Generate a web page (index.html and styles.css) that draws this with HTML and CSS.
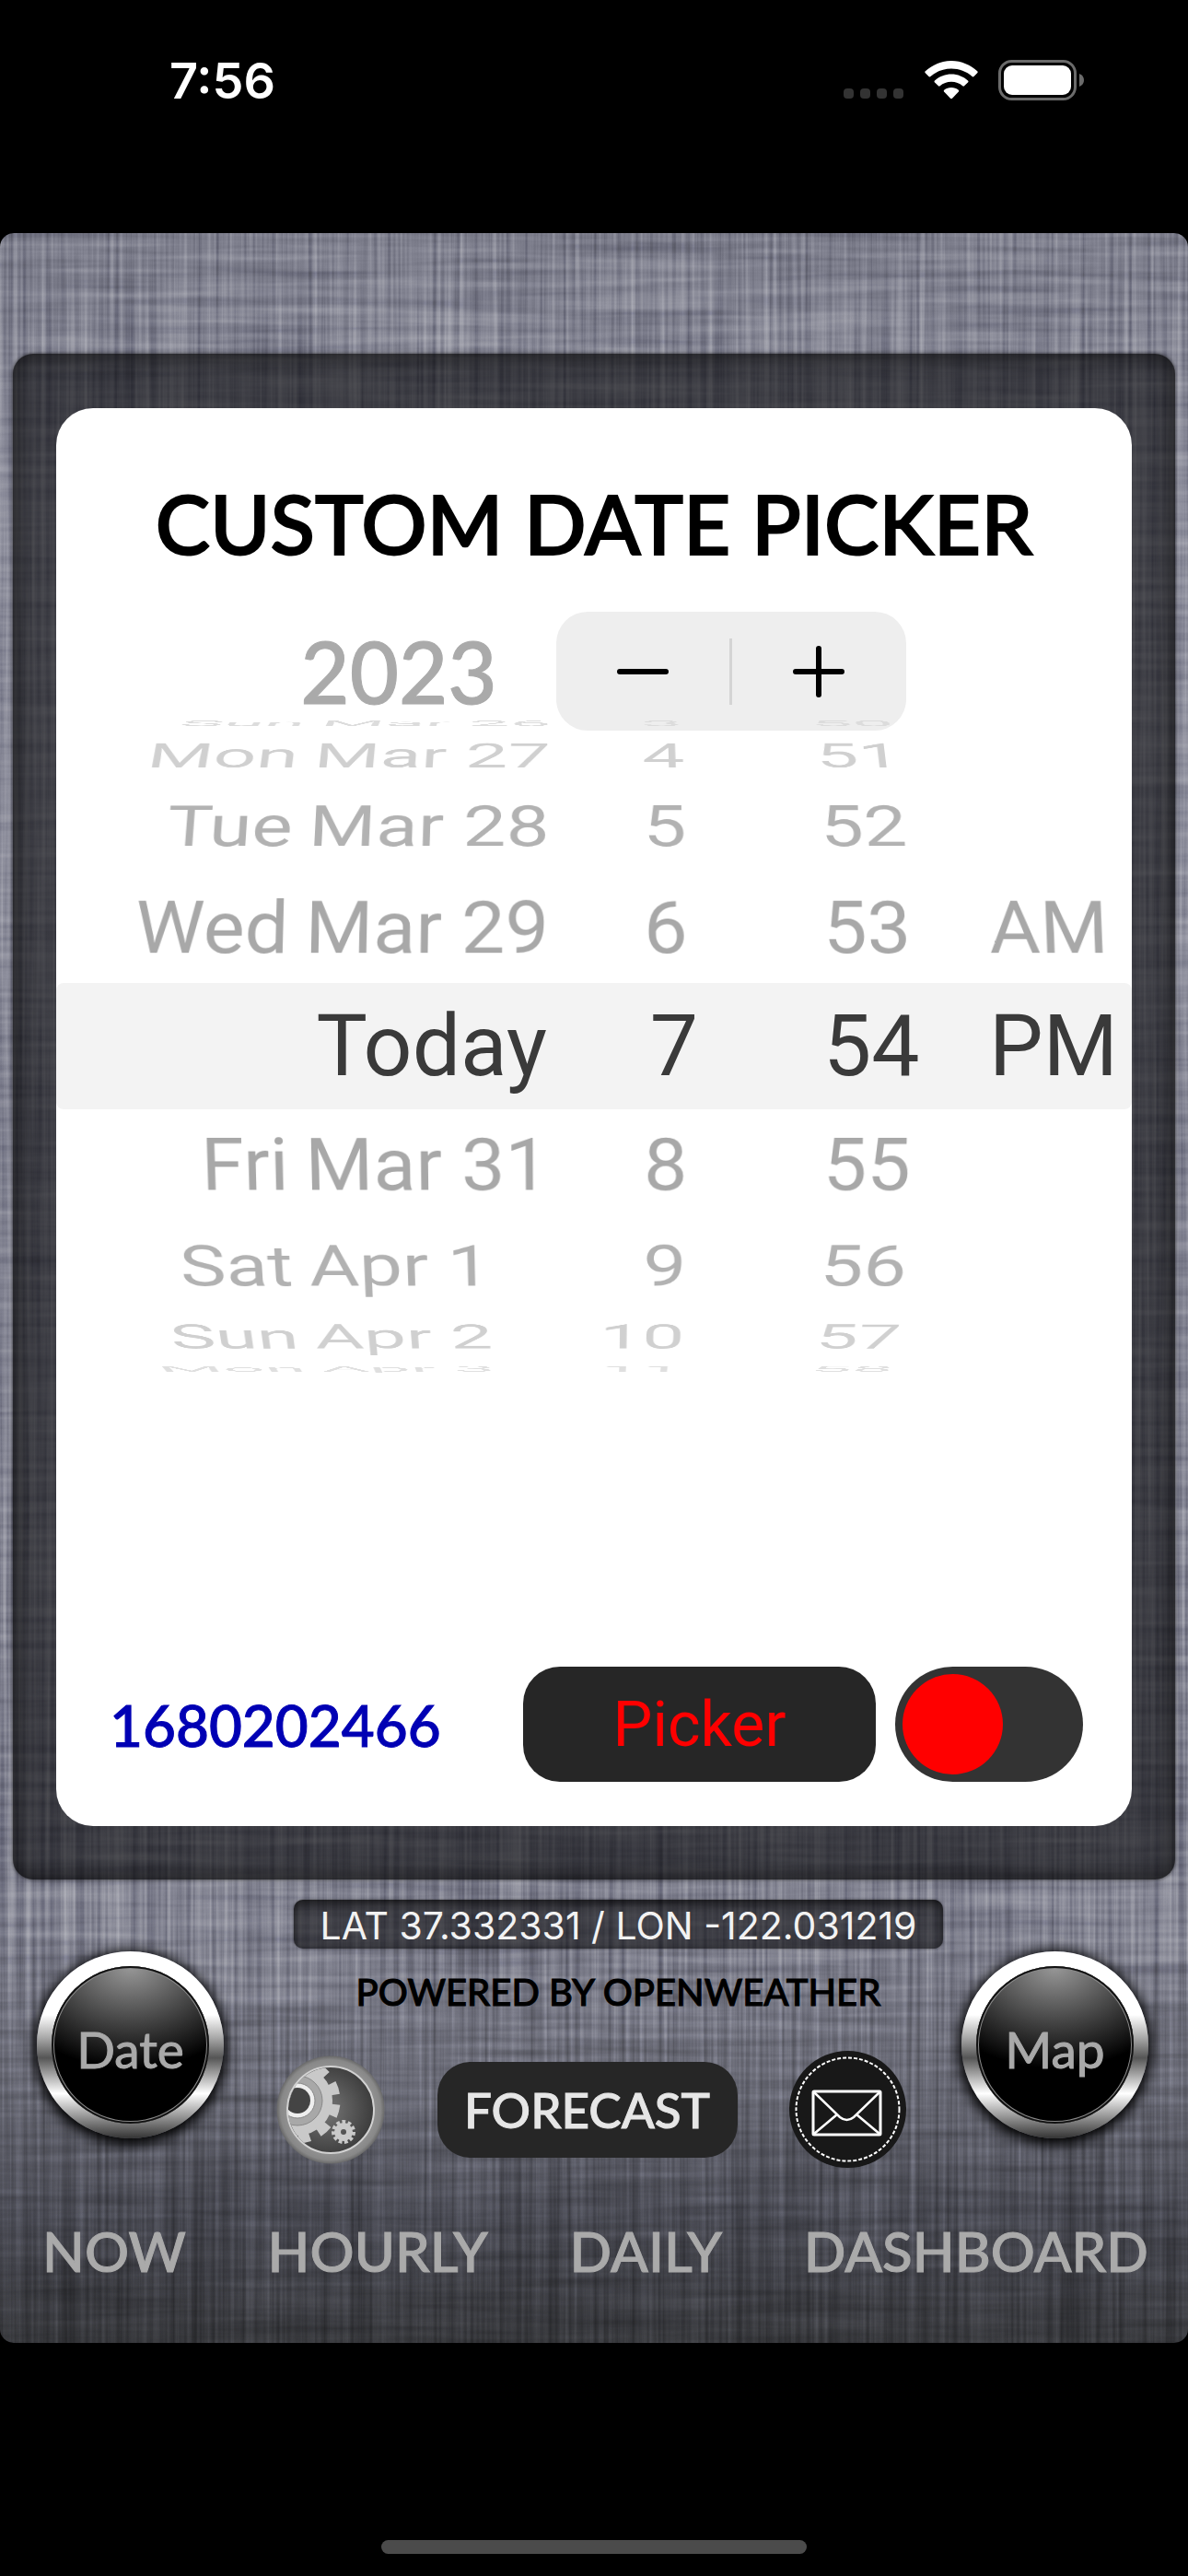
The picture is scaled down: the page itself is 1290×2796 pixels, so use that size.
FILE: index.html
```html
<!DOCTYPE html>
<html lang="en">
<head>
<meta charset="utf-8">
<meta name="viewport" content="width=device-width, initial-scale=1">
<title>Custom Date Picker</title>
<link rel="stylesheet" href="styles.css">
</head>
<body>
<header class="status">
  <time class="clock">7:56</time>
  <div class="status-icons">
    <svg width="66" height="44" viewBox="0 0 66 44" fill="#333"><rect y="31" width="11" height="11" rx="4"/><rect x="18" y="31" width="11" height="11" rx="4"/><rect x="36" y="31" width="11" height="11" rx="4"/><rect x="54" y="31" width="11" height="11" rx="4"/></svg>
    <svg width="58" height="44" viewBox="0 0 58 44" fill="#fff"><path d="M29 1C40 1 50 5.500 57.500 12.500Q58 13.500 57.200 14.300L53.500 18Q52.500 18.800 51.600 18C45.500 12.500 37.500 9.500 29 9.500S12.500 12.500 6.400 18Q5.500 18.800 4.500 18L.8 14.300Q0 13.500.5 12.500C8 5.500 18 1 29 1Z"/><path d="M29 15.500C36 15.500 42.300 18.200 47 22.500Q48 23.500 47 24.400L43 28.300Q42.200 29 41.300 28.300C38 25.500 33.700 23.800 29 23.800S20 25.500 16.700 28.300Q15.800 29 15 28.300L11 24.400Q10 23.500 11 22.500C15.700 18.200 22 15.500 29 15.500Z"/><path d="M29 30C32 30 34.700 31 36.800 32.700Q37.800 33.600 36.900 34.600L30 41.700Q29 42.600 28 41.700L21.100 34.600Q20.200 33.600 21.200 32.700C23.300 31 26 30 29 30Z"/></svg>
    <svg width="93" height="44" viewBox="0 0 93 44"><rect x="1.500" y="1.500" width="82" height="41" rx="13" fill="none" stroke="#6b6b6b" stroke-width="3"/><rect x="6" y="6" width="73" height="32" rx="9" fill="#fff"/><path d="M88 15Q93 17 93 22T88 29Z" fill="#6b6b6b"/></svg>
  </div>
</header>

<main class="app">
  <section class="bezel">
    <div class="card">
      <h1 class="title">CUSTOM DATE PICKER</h1>
      <div class="year-row">
        <output class="year">2023</output>
        <div class="stepper" role="group" aria-label="Year">
          <button class="step" aria-label="Previous year"><svg width="56" height="56" viewBox="0 0 56 56"><path d="M3 28H53" stroke="#000" stroke-width="6" stroke-linecap="round"/></svg></button>
          <button class="step" aria-label="Next year"><svg width="56" height="56" viewBox="0 0 56 56"><path d="M3 28H53M28 3V53" stroke="#000" stroke-width="6" stroke-linecap="round"/></svg></button>
        </div>
      </div>

      <div class="wheel" aria-label="Date and time">
        <div class="row up4"><span class="weekday">Sun</span><span>Mar 26</span><span class="hour">3</span><span class="minute">50</span></div>
        <div class="row up3"><span class="weekday">Mon</span><span>Mar 27</span><span class="hour">4</span><span class="minute">51</span></div>
        <div class="row up2"><span class="weekday">Tue</span><span>Mar 28</span><span class="hour">5</span><span class="minute">52</span></div>
        <div class="row up1"><span class="weekday">Wed</span><span>Mar 29</span><span class="hour">6</span><span class="minute">53</span><span>AM</span></div>
        <div class="row current"><span class="today">Today</span><span class="hour">7</span><span class="minute">54</span><span>PM</span></div>
        <div class="row down1"><span class="weekday">Fri</span><span>Mar 31</span><span class="hour">8</span><span class="minute">55</span></div>
        <div class="row down2"><span class="weekday">Sat</span><span>Apr 1</span><span class="hour">9</span><span class="minute">56</span></div>
        <div class="row down3"><span class="weekday">Sun</span><span>Apr 2</span><span class="hour">10</span><span class="minute">57</span></div>
        <div class="row down4"><span class="weekday">Mon</span><span>Apr 3</span><span class="hour">11</span><span class="minute">58</span></div>
      </div>

      <div class="card-foot">
        <output class="stamp">1680202466</output>
        <button class="picker-button">Picker</button>
        <input class="switch" type="checkbox" role="switch" aria-label="Use picker">
      </div>
    </div>
  </section>

  <section class="controls">
    <button class="metal">Date</button>
    <div class="center">
      <div class="place">
        <p class="coords">LAT 37.332331 / LON -122.031219</p>
        <p class="powered">POWERED BY OPENWEATHER</p>
      </div>
      <div class="actions">
        <button class="icon-button" aria-label="Settings">
          <svg width="118" height="118" viewBox="0 0 118 118">
            <defs>
              <radialGradient id="well" cx="45%" cy="50%" r="55%"><stop offset="0" stop-color="#777"/><stop offset="1" stop-color="#3c3c3c"/></radialGradient>
              <radialGradient id="rim"><stop offset=".8" stop-color="#929292"/><stop offset=".93" stop-color="#888"/><stop offset="1" stop-color="#686868"/></radialGradient>
              <clipPath id="port"><circle cx="59" cy="59" r="46"/></clipPath>
            </defs>
            <circle cx="59" cy="59" r="58.500" fill="url(#rim)"/>
            <circle cx="59" cy="59" r="47" fill="url(#well)" stroke="#d2d2d2" stroke-width="2"/>
            <g clip-path="url(#port)">
              <circle cx="23" cy="49" r="38" fill="#c9c9c9"/>
              <circle cx="23" cy="49" r="41" fill="none" stroke="#c9c9c9" stroke-width="11" pathLength="110" stroke-dasharray="5.500 4.500" transform="rotate(-27 23 49)"/>
              <circle cx="23" cy="49" r="27" fill="#a8a8a8" stroke="#888" stroke-width="1"/>
              <circle cx="23" cy="49" r="19" fill="#eee" stroke="#888" stroke-width="1"/>
              <circle cx="23" cy="49" r="14" fill="#444"/>
            </g>
            <circle cx="73" cy="83" r="6.500" fill="none" stroke="#c9c9c9" stroke-width="7"/>
            <circle cx="73" cy="83" r="11" fill="none" stroke="#c9c9c9" stroke-width="4" pathLength="110" stroke-dasharray="6 4"/>
          </svg>
        </button>
        <button class="forecast">FORECAST</button>
        <button class="icon-button" aria-label="Mail">
          <svg width="127" height="127" viewBox="0 0 127 127" fill="none" stroke="#fff">
            <circle cx="63.500" cy="63.500" r="63.500" fill="#181818" stroke="none"/>
            <circle cx="63.500" cy="63.500" r="56" stroke-width="2" stroke-dasharray="4 2"/>
            <rect x="26" y="44" width="73" height="47" rx="1" stroke-width="3"/>
            <path d="M27 45L55 72Q62.500 78 70 72L98 45M27 90L52 69M98 90L73 69" stroke-width="2.500"/>
          </svg>
        </button>
      </div>
    </div>
    <button class="metal">Map</button>
  </section>

  <nav class="tabs">
    <a href="#now">NOW</a>
    <a href="#hourly">HOURLY</a>
    <a href="#daily">DAILY</a>
    <a href="#dashboard">DASHBOARD</a>
  </nav>
</main>

<footer class="home"><div class="home-bar"></div></footer>
</body>
</html>
```
FILE: styles.css
```css
* {
  box-sizing: border-box;
}

body {
  margin: 0;
  min-height: 100vh;
  display: flex;
  flex-direction: column;
  background: #000;
  font-family: Futura, Lato, sans-serif;
}

h1, p {
  margin: 0;
}

button {
  margin: 0;
  padding: 0;
  border: 0;
  background: none;
  font: inherit;
  color: inherit;
}

svg {
  display: block;
}

/* Status bar */
.status {
  height: 253px;
  padding: 56px 113px 0 184px;
  display: flex;
  justify-content: space-between;
  align-items: flex-start;
}

.clock {
  font: 600 54px/64px Inter, sans-serif;
  color: #fff;
}

.status-icons {
  display: flex;
  gap: 22px;
  padding-top: 9px;
}

/* Woven metal body */
.app {
  flex: 1;
  display: flex;
  flex-direction: column;
  padding-top: 131px;
  border-radius: 15px;
  background-image:
    url("data:image/svg+xml,%3Csvg xmlns='http://www.w3.org/2000/svg' width='1290' height='2290'%3E%3Cfilter id='n' x='0' y='0' width='100%25' height='100%25' color-interpolation-filters='sRGB'%3E%3CfeTurbulence type='fractalNoise' baseFrequency='0.2 0.0025' numOctaves='3' seed='4'/%3E%3CfeColorMatrix values='.36 0 0 0 .32 .36 0 0 0 .32 .36 0 0 0 .32 0 0 0 0 1'/%3E%3C/filter%3E%3Crect width='1290' height='2290' filter='url(%23n)'/%3E%3C/svg%3E"),
    url("data:image/svg+xml,%3Csvg xmlns='http://www.w3.org/2000/svg' width='1290' height='2290'%3E%3Cfilter id='n' x='0' y='0' width='100%25' height='100%25' color-interpolation-filters='sRGB'%3E%3CfeTurbulence type='fractalNoise' baseFrequency='0.005 0.1' numOctaves='3' seed='9'/%3E%3CfeColorMatrix values='.22 0 0 0 .39 .22 0 0 0 .39 .22 0 0 0 .39 0 0 0 0 1'/%3E%3C/filter%3E%3Crect width='1290' height='2290' filter='url(%23n)'/%3E%3C/svg%3E"),
    linear-gradient(#7c7d8b 0%, #8d8e9c 12%, #858694 60%, #828391 80%, #63646f 89%, #484952 94%, #36373b 100%);
  background-size: 1290px 2290px, 1290px 2290px, auto;
  background-blend-mode: overlay, overlay, normal;
}

.bezel {
  flex: 1;
  display: flex;
  margin: 0 14px;
  padding: 59px 47px 58px;
  border-radius: 22px;
  background: rgba(8, 8, 10, 0.58);
  box-shadow: inset 0 0 26px rgba(0, 0, 0, 0.7), 0 0 4px rgba(0, 0, 0, 0.7);
}

.card {
  flex: 1;
  display: flex;
  flex-direction: column;
  padding: 69px 0 48px;
  border-radius: 40px;
  background: #fff;
}

.title {
  font-size: 89px;
  font-weight: 500;
  line-height: 112px;
  text-align: center;
  -webkit-text-stroke: 2px currentColor;
}

.year-row {
  margin-top: 40px;
  padding-left: 20px;
  display: flex;
  justify-content: center;
  align-items: center;
  gap: 64px;
}

.year {
  font-size: 92px;
  font-weight: 500;
  line-height: 112px;
  color: #aaa;
  -webkit-text-stroke: 1px currentColor;
}

.stepper {
  width: 380px;
  height: 129px;
  display: flex;
  align-items: center;
  border-radius: 34px;
  background: #eee;
}

.step {
  flex: 1;
  height: 72px;
  display: flex;
  justify-content: center;
  align-items: center;
}

.step + .step {
  border-left: 3px solid #d4d4d4;
}

/* Rows sit on a cylinder, 20 degrees apart */
.wheel {
  margin-top: 274px;
  display: grid;
  perspective: 5000px;
  font-family: Roboto, sans-serif;
}

.row {
  grid-area: 1 / 1;
  height: 137px;
  display: grid;
  grid-template-columns: 269fr 264fr 153fr 329fr 153fr;
  align-items: center;
  font-size: 85px;
  line-height: 100px;
  white-space: nowrap;
  color: #a8a8a8;
}

.row span {
  min-width: 0;
}

.weekday {
  padding-right: 18px;
  text-align: right;
}

.hour {
  text-align: right;
}

.minute {
  padding-left: 148px;
}

.current {
  grid-template-columns: 533fr 164fr 316fr 155fr;
  border-radius: 8px;
  background: #f3f3f3;
  font-size: 93px;
  color: #3a3a3a;
}

.current .minute {
  padding-left: 136px;
}

.today {
  text-align: right;
}

.up1 { transform: translateZ(-378px) rotateX(20deg) translateZ(378px); }
.up2 { transform: translateZ(-378px) rotateX(40deg) translateZ(378px); color: #b2b2b2; }
.up3 { transform: translateZ(-378px) rotateX(60deg) translateZ(378px); color: #d0d0d0; }
.up4 { transform: translateZ(-378px) rotateX(80deg) translateZ(378px); color: #dcdcdc; }
.down1 { transform: translateZ(-378px) rotateX(-20deg) translateZ(378px); }
.down2 { transform: translateZ(-378px) rotateX(-40deg) translateZ(378px); color: #b2b2b2; }
.down3 { transform: translateZ(-378px) rotateX(-60deg) translateZ(378px); color: #d0d0d0; }
.down4 { transform: translateZ(-378px) rotateX(-80deg) translateZ(378px); color: #dfdfdf; }

.card-foot {
  margin-top: auto;
  padding: 0 53px 0 58px;
  display: flex;
  align-items: center;
}

.stamp {
  flex: 1;
  font-size: 62px;
  font-weight: 500;
  color: #0000b4;
  -webkit-text-stroke: 1px currentColor;
}

.picker-button {
  width: 383px;
  height: 125px;
  margin-right: 21px;
  border-radius: 40px;
  background: #262626;
  font: 400 68px/80px Roboto, sans-serif;
  color: #f00;
}

.switch {
  appearance: none;
  width: 204px;
  height: 125px;
  margin: 0;
  padding: 8px;
  border-radius: 63px;
  background: #333;
}

.switch::before {
  content: "";
  display: block;
  width: 109px;
  height: 109px;
  border-radius: 50%;
  background: #f00;
}

.switch:checked::before {
  margin-left: auto;
}

/* Lower controls */
.controls {
  display: grid;
  grid-template-columns: 203px 1fr 203px;
  align-items: start;
  padding: 22px 43px 0 40px;
}

.metal {
  width: 203px;
  height: 203px;
  margin-top: 56px;
  padding-top: 8px;
  border: 16px solid transparent;
  border-radius: 50%;
  background:
    radial-gradient(ellipse 85% 65% at 50% 0%, #999 0%, #444 55%, transparent 100%) padding-box,
    linear-gradient(#000, #000) padding-box,
    linear-gradient(#fff 0%, #fff 34%, #aaa 46%, #555 57%, #fff 76%, #999 88%, #333 100%) border-box;
  box-shadow: inset 0 0 0 2px #111, inset 0 0 0 3px #888, 0 3px 14px 4px #000;
  font-size: 55px;
  line-height: 64px;
  color: #a9a9a9;
  -webkit-text-stroke: 1px currentColor;
}

.place {
  display: flex;
  flex-direction: column;
  align-items: center;
  padding-left: 56px;
}

.coords {
  width: 705px;
  height: 53px;
  border-radius: 10px;
  background: rgba(8, 8, 10, 0.55);
  box-shadow: inset 0 4px 12px rgba(0, 0, 0, 0.7), 0 0 3px rgba(0, 0, 0, 0.5);
  font: 400 41px/56px Inter, sans-serif;
  text-align: center;
  color: #f2f2f2;
}

.powered {
  margin-top: 20px;
  font-size: 40px;
  font-weight: 500;
  line-height: 54px;
  color: #000;
  -webkit-text-stroke: 1px currentColor;
}

.actions {
  margin: 37px 60px 0 57px;
  display: flex;
  justify-content: space-between;
  align-items: center;
}

.forecast {
  width: 326px;
  height: 104px;
  border-radius: 36px;
  background: #262626;
  font-size: 53px;
  font-weight: 500;
  line-height: 64px;
  color: #e6e6e6;
  -webkit-text-stroke: 1px currentColor;
}

.tabs {
  margin-top: 50px;
  padding: 0 43px 60px 46px;
  display: flex;
  justify-content: space-between;
  font-size: 60px;
  font-weight: 500;
  line-height: 80px;
  -webkit-text-stroke: 1px currentColor;
}

.tabs a {
  color: #aaa;
  text-decoration: none;
}

/* Home indicator */
.home {
  height: 253px;
  display: flex;
  justify-content: center;
  align-items: flex-end;
  padding-bottom: 24px;
}

.home-bar {
  width: 462px;
  height: 15px;
  border-radius: 8px;
  background: #4b4b4b;
}
```
